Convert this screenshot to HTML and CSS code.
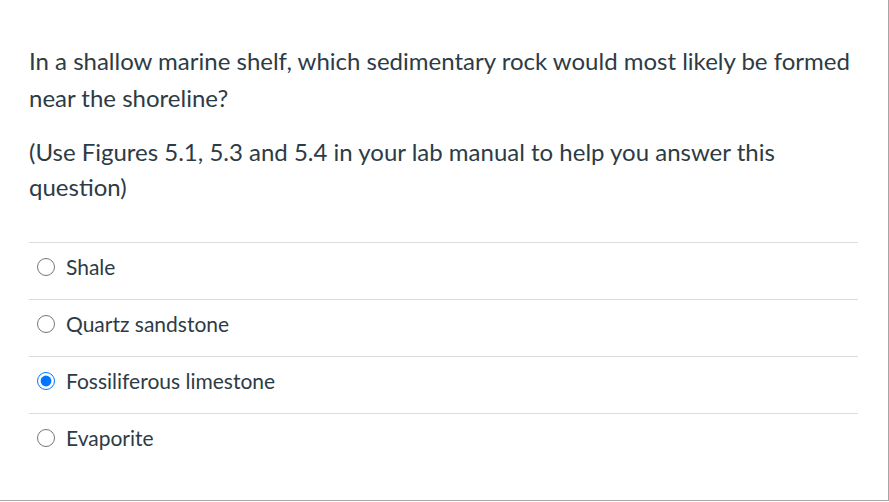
FILE: index.html
```html
<!DOCTYPE html>
<html>
<head>
<meta charset="utf-8">
<link rel="stylesheet" href="styles.css">
</head>
<body>
<div class="quiz">
  <div class="question">
    <p class="q-main">In a shallow marine shelf, which sedimentary rock would most likely be formed near the shoreline?</p>
    <p class="q-note">(Use Figures 5.1, 5.3 and 5.4 in your lab manual to help you answer this question)</p>
  </div>
  <div class="answers">
    <label class="answer"><input type="radio" name="a"><span>Shale</span></label>
    <label class="answer"><input type="radio" name="a"><span>Quartz sandstone</span></label>
    <label class="answer"><input type="radio" name="a" checked><span>Fossiliferous limestone</span></label>
    <label class="answer"><input type="radio" name="a"><span>Evaporite</span></label>
  </div>
</div>
</body>
</html>
```
FILE: styles.css
```css
html, body {
  margin: 0;
  padding: 0;
  background: #ffffff;
}
.quiz {
  box-sizing: border-box;
  width: 889px;
  height: 501px;
  border-right: 1px solid #a6a6a6;
  border-bottom: 1px solid #a6a6a6;
  padding: 42px 30px 0 29px;
  font-family: Lato, "Liberation Sans", sans-serif;
  color: #2d3b45;
}
.question p {
  margin: 0;
}
.q-main {
  font-size: 24px;
  line-height: 37px;
}
.q-note {
  margin-top: 18px !important;
  font-size: 24px;
  line-height: 35px;
}
.answers {
  margin-top: 38px;
  display: flex;
  flex-direction: column;
}
.answer {
  display: flex;
  align-items: center;
  box-sizing: border-box;
  height: 57px;
  border-top: 1px solid #dcdcdc;
  padding-bottom: 9px;
  font-size: 21px;
}
.answer input {
  width: 18px;
  height: 18px;
  margin: 0 11px 0 8px;
  accent-color: #0075ff;
}
```
